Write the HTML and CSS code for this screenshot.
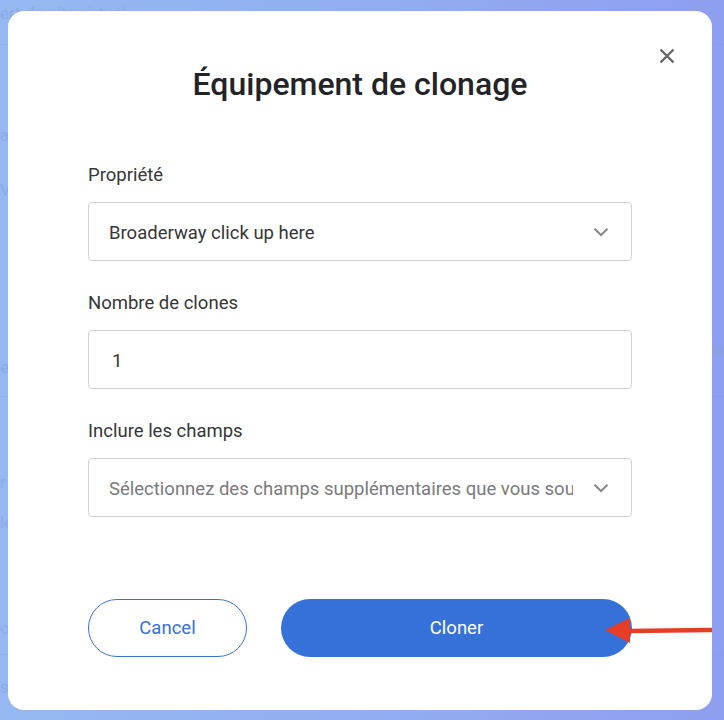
FILE: index.html
```html
<!DOCTYPE html>
<html lang="fr">
<head>
<meta charset="utf-8">
<title>Équipement de clonage</title>
<link rel="stylesheet" href="styles.css">
</head>
<body>
<div class="ghost">
  <div class="ghost-row r1"><span class="gt">ert du site virtuel</span></div>
  <div class="ghost-row r2"><span class="gt t-ar">ar</span><span class="gt t-v">V</span></div>
  <div class="ghost-row r3"><span class="gt t-er">er</span><span class="gt gr">ére</span></div>
  <div class="ghost-row r4"><span class="gt t-r">r</span><span class="gt t-le">le</span><span class="gt t-o">o</span></div>
  <div class="ghost-row r5"><span class="gt">si</span></div>
</div>

<div class="modal">
  <button class="close" aria-label="Fermer">
    <svg width="16" height="16" viewBox="0 0 16 16"><path d="M1.5 1.5 L14.5 14.5 M14.5 1.5 L1.5 14.5" stroke="#666" stroke-width="2.4" fill="none"/></svg>
  </button>
  <h1 class="title">Équipement de clonage</h1>

  <div class="field">
    <label class="label">Propriété</label>
    <div class="input select">
      <span class="value">Broaderway click up here</span>
      <svg class="chev" width="16" height="10" viewBox="0 0 16 10"><path d="M1.5 1.8 L8 8 L14.5 1.8" stroke="#888" stroke-width="2" fill="none"/></svg>
    </div>
  </div>

  <div class="field">
    <label class="label">Nombre de clones</label>
    <div class="input">
      <span class="value num">1</span>
    </div>
  </div>

  <div class="field">
    <label class="label">Inclure les champs</label>
    <div class="input select">
      <span class="value placeholder">Sélectionnez des champs supplémentaires que vous souhaitez inclure</span>
      <svg class="chev" width="16" height="10" viewBox="0 0 16 10"><path d="M1.5 1.8 L8 8 L14.5 1.8" stroke="#888" stroke-width="2" fill="none"/></svg>
    </div>
  </div>

  <div class="actions">
    <button class="btn btn-cancel">Cancel</button>
    <button class="btn btn-primary">Cloner</button>
  </div>
</div>

<svg class="arrow" width="107" height="30" viewBox="0 0 107 30">
  <polygon points="0,15 25,3 25,28" fill="#e63e26"/>
  <path d="M22 16 L107 15" stroke="#e63e26" stroke-width="4.5" fill="none"/>
</svg>
</body>
</html>
```

FILE: styles.css
```css
* { box-sizing: border-box; }
html, body { margin: 0; padding: 0; }
body {
  width: 724px;
  height: 720px;
  overflow: hidden;
  position: relative;
  font-family: Roboto, "Liberation Sans", Arial, sans-serif;
  background: linear-gradient(90deg, #95b8f2 0%, #92aef0 50%, #8e9ef0 100%);
}

.ghost {
  display: flex;
  flex-direction: column;
  color: #86a4dc;
  font-size: 17px;
  line-height: 20px;
  opacity: 0.6;
}
.ghost-row {
  display: flex;
  flex-direction: column;
  align-items: flex-start;
  border-bottom: 1px solid rgba(120, 150, 210, 0.35);
  position: relative;
}
.gt { white-space: nowrap; }
.r1 { height: 45px; padding-top: 3px; }
.r2 { height: 293px; border-bottom: none; }
.t-ar { margin-top: 80px; }
.t-v { margin-top: 35px; }
.r3 { height: 59px; flex-direction: row; justify-content: space-between; align-items: center; }
.gr { margin-right: -12px; margin-top: -36px; }
.r4 { height: 258px; }
.t-r { margin-top: 75px; }
.t-le { margin-top: 20px; }
.t-o { margin-top: 86px; }
.r5 { height: 65px; border-bottom: none; padding-top: 22px; }

.modal {
  position: absolute;
  left: 8px;
  top: 11px;
  width: 704px;
  height: 699px;
  background: #fff;
  border-radius: 16px;
  padding: 54px 80px 53px;
  display: flex;
  flex-direction: column;
}

.close {
  position: absolute;
  top: 37px;
  right: 37px;
  width: 16px;
  height: 16px;
  padding: 0;
  border: none;
  background: none;
  display: flex;
}

.title {
  margin: 0 0 61px;
  text-align: center;
  font-size: 32px;
  line-height: 38px;
  font-weight: 500;
  color: #232427;
}

.field {
  display: flex;
  flex-direction: column;
  margin-bottom: 31px;
}
.label {
  font-size: 18.5px;
  line-height: 22px;
  color: #363636;
  margin-bottom: 16px;
}
.input {
  height: 59px;
  border: 1px solid #d3d3d3;
  border-radius: 4px;
  display: flex;
  align-items: center;
  padding: 2px 22px 0 20px;
  gap: 20px;
}
.value {
  flex: 1;
  font-size: 18.5px;
  color: #363636;
  white-space: nowrap;
  overflow: hidden;
}
.num { padding-left: 3px; }
.placeholder { color: #7a7a7a; }
.chev { flex: none; margin-top: -2px; }

.actions {
  margin-top: auto;
  display: flex;
  gap: 34px;
}
.btn {
  height: 58px;
  border-radius: 29px;
  font-family: inherit;
  font-size: 18.5px;
}
.btn-cancel {
  width: 159px;
  background: #fff;
  border: 1px solid #3a72d8;
  color: #3570d8;
}
.btn-primary {
  flex: 1;
  background: #3571d9;
  border: none;
  color: #fff;
}

.arrow {
  position: absolute;
  left: 605px;
  top: 615px;
}
```
